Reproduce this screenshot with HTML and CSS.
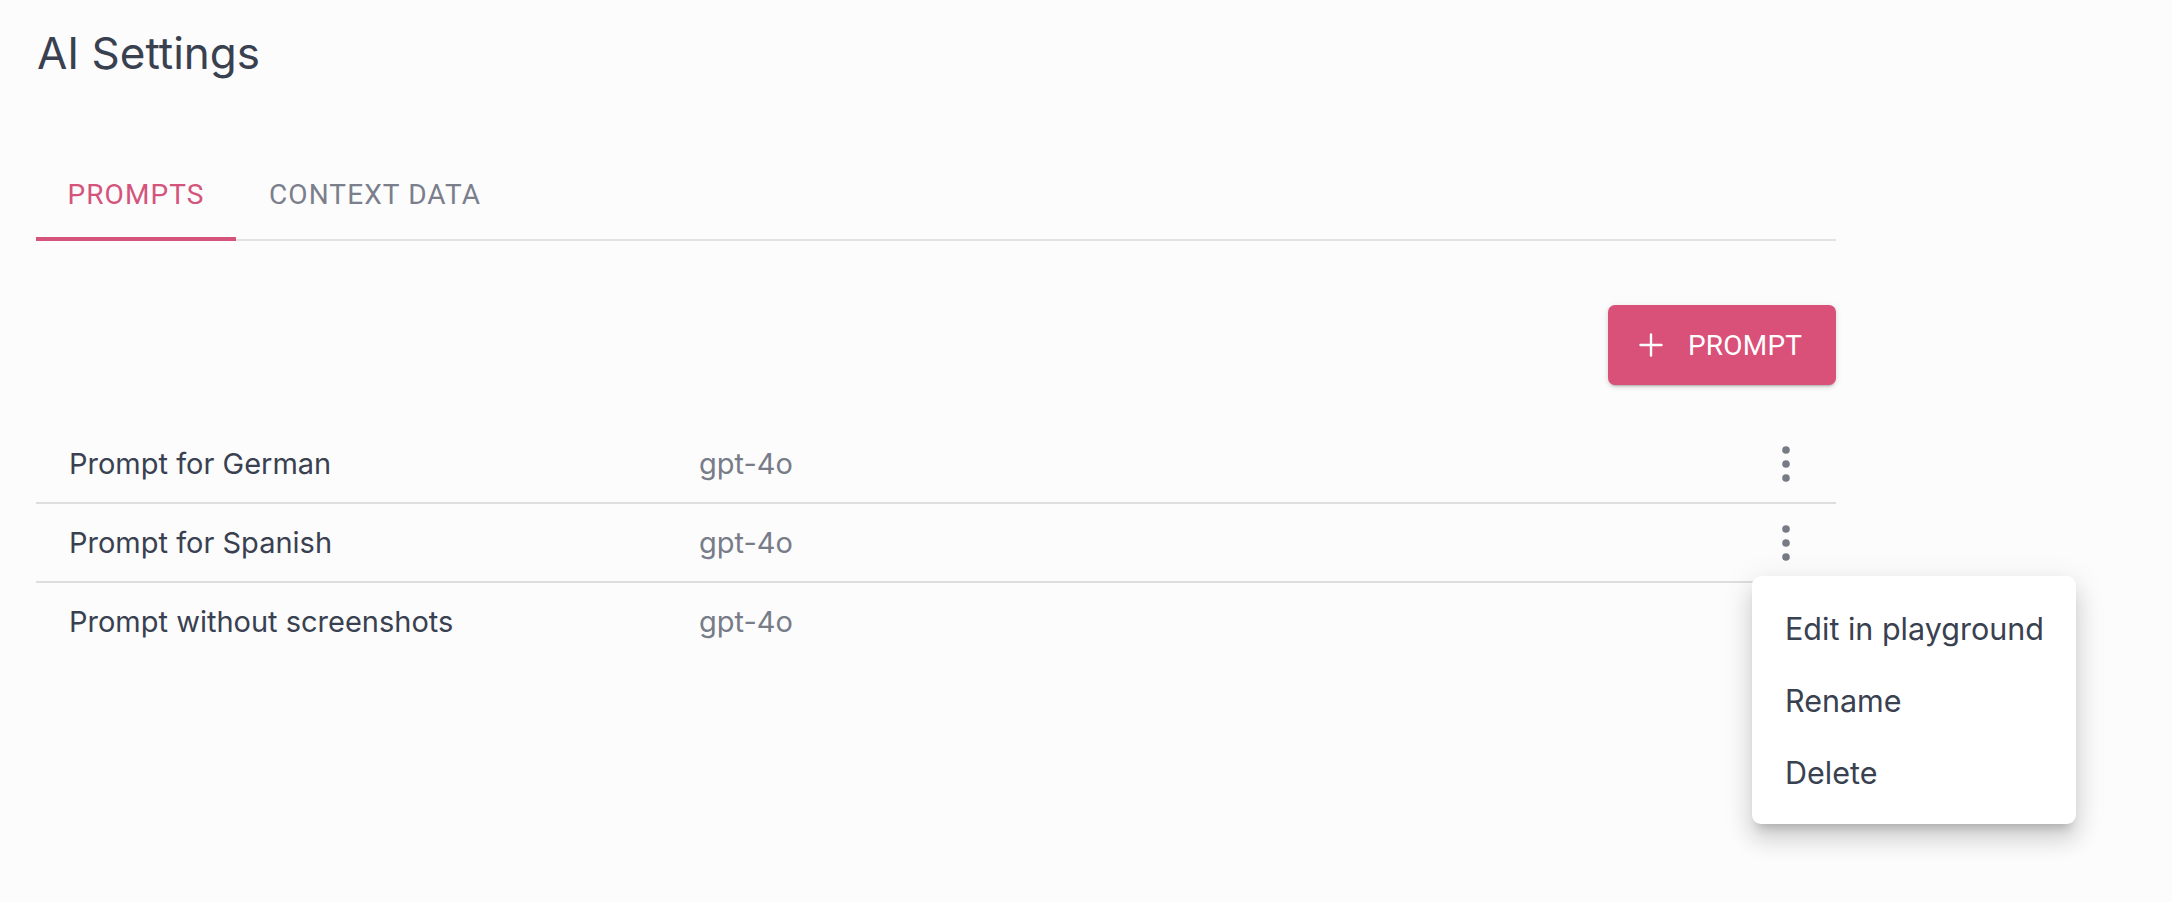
FILE: index.html
```html
<!DOCTYPE html>
<html lang="en">
<head>
<meta charset="utf-8">
<title>AI Settings</title>
<link rel="stylesheet" href="styles.css">
</head>
<body>
<main class="page">
  <h1 class="title">AI Settings</h1>

  <nav class="tabs">
    <div class="tab tab-active">PROMPTS</div>
    <div class="tab">CONTEXT DATA</div>
  </nav>

  <div class="toolbar">
    <button class="btn-add" type="button">
      <svg class="plus" viewBox="0 0 24 24" width="24" height="24" aria-hidden="true">
        <path d="M12 1.5v21M1.5 12h21" stroke="#fff" stroke-width="2.4" stroke-linecap="round" fill="none"/>
      </svg>
      <span>PROMPT</span>
    </button>
  </div>

  <div class="list">
    <div class="row">
      <div class="name">Prompt for German</div>
      <div class="model">gpt-4o</div>
      <div class="kebab">
        <svg viewBox="0 0 8 36" width="8" height="36" aria-hidden="true"><circle cx="4" cy="4" r="3.8"/><circle cx="4" cy="18" r="3.8"/><circle cx="4" cy="32" r="3.8"/></svg>
      </div>
    </div>
    <div class="row">
      <div class="name">Prompt for Spanish</div>
      <div class="model">gpt-4o</div>
      <div class="kebab">
        <svg viewBox="0 0 8 36" width="8" height="36" aria-hidden="true"><circle cx="4" cy="4" r="3.8"/><circle cx="4" cy="18" r="3.8"/><circle cx="4" cy="32" r="3.8"/></svg>
      </div>
    </div>
    <div class="row row-last">
      <div class="name">Prompt without screenshots</div>
      <div class="model">gpt-4o</div>
      <div class="kebab">
        <svg viewBox="0 0 8 36" width="8" height="36" aria-hidden="true"><circle cx="4" cy="4" r="3.8"/><circle cx="4" cy="18" r="3.8"/><circle cx="4" cy="32" r="3.8"/></svg>
      </div>
    </div>
  </div>
</main>

<ul class="menu">
  <li class="menu-item">Edit in playground</li>
  <li class="menu-item">Rename</li>
  <li class="menu-item">Delete</li>
</ul>
</body>
</html>
```

FILE: styles.css
```css
* {
  box-sizing: border-box;
}

html, body {
  margin: 0;
  padding: 0;
}

body {
  background: #fcfcfd;
  font-family: "Inter", "Noto Sans", sans-serif;
  color: #394150;
  position: relative;
  min-height: 902px;
}

.page {
  width: 1872px;
  padding: 0 36px;
}

.title {
  margin: 26px 0 0 1px;
  font-size: 44px;
  line-height: 54px;
  font-weight: 400;
  color: #394150;
}

.tabs {
  display: flex;
  margin-top: 72px;
  box-shadow: inset 0 -2px 0 #e2e2e5;
}

.tab {
  font-family: "Roboto", "Liberation Sans", sans-serif;
  font-size: 28px;
  line-height: 33px;
  font-weight: 400;
  letter-spacing: 1.1px;
  color: #7b7f8b;
  padding: 26px 33px 26px;
  border-bottom: 4px solid transparent;
}

.tab-active {
  width: 200px;
  text-align: center;
  padding-left: 0;
  padding-right: 0;
  color: #d4547b;
  border-bottom-color: #d4547b;
}

.toolbar {
  display: flex;
  justify-content: flex-end;
  margin-top: 64px;
}

.btn-add {
  display: flex;
  align-items: center;
  height: 80px;
  width: 228px;
  padding: 0 0 0 31px;
  border: none;
  border-radius: 7px;
  background: #d95078;
  color: #fff;
  font-family: "Roboto", "Liberation Sans", sans-serif;
  font-size: 28px;
  font-weight: 400;
  letter-spacing: 0.2px;
  box-shadow: 0 3px 2px -2px rgba(0, 0, 0, 0.2), 0 2px 4px 0 rgba(0, 0, 0, 0.12), 0 1px 10px 0 rgba(0, 0, 0, 0.06);
}

.plus {
  display: block;
  margin-right: 25px;
  flex: none;
}

.list {
  margin-top: 40px;
}

.row {
  display: grid;
  grid-template-columns: 630px 1fr 48px;
  align-items: center;
  height: 79px;
  padding: 0 26px 0 33px;
  border-bottom: 2px solid #dedee1;
  font-size: 29px;
}

.row-last {
  border-bottom-color: transparent;
}

.name {
  color: #394150;
}

.model {
  color: #787c88;
}

.kebab {
  display: flex;
  justify-content: center;
  align-items: center;
  fill: #777b86;
}

.kebab svg {
  display: block;
}

.menu {
  position: absolute;
  left: 1752px;
  top: 576px;
  width: 324px;
  margin: 0;
  padding: 16px 0;
  list-style: none;
  background: #fff;
  border-radius: 9px;
  box-shadow: 0 10px 10px -6px rgba(0, 0, 0, 0.18), 0 16px 22px 2px rgba(0, 0, 0, 0.11), 0 6px 30px 4px rgba(0, 0, 0, 0.08);
}

.menu-item {
  display: flex;
  align-items: center;
  height: 72px;
  padding: 0 33px;
  font-size: 30.5px;
  color: #394150;
  white-space: nowrap;
}
```
